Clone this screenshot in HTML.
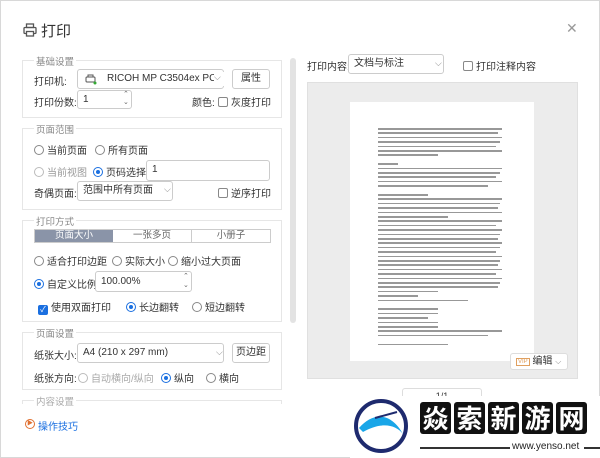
<!DOCTYPE html>
<html><head><meta charset="utf-8"><style>
*{box-sizing:border-box;margin:0;padding:0}
body{width:600px;height:458px;overflow:hidden;background:#fff;font-family:"Liberation Sans","Noto Sans CJK SC",sans-serif;font-size:10px;color:#333;position:relative}
.a{position:absolute;white-space:nowrap}
.grp{position:absolute;left:22px;width:260px;border:1px solid #e6e6e6}
.lg{position:absolute;top:-7px;left:11px;background:#fff;color:#888;font-size:9.5px;padding:0 2px}
.rad{display:inline-block;width:10px;height:10px;border:1px solid #888;border-radius:50%;vertical-align:-1px;margin-right:3px;position:relative}
.rad.on{border-color:#1a6fe0}
.rad.on:after{content:"";position:absolute;left:2px;top:2px;width:4px;height:4px;border-radius:50%;background:#1a6fe0}
.chk{display:inline-block;width:10px;height:10px;border:1px solid #888;border-radius:2px;vertical-align:-1px;margin-right:3px}
.inp{position:absolute;border:1px solid #ccc;border-radius:3px;background:#fff;padding-left:5px;line-height:18px;white-space:nowrap;overflow:hidden}
.btn{position:absolute;border:1px solid #ccc;border-radius:3px;text-align:center;line-height:18px;background:#fff}
.ln{position:absolute;left:378px;height:1.5px;background:#444;opacity:.55}
.lc{display:inline-block;width:31px;height:32px;background:#111;color:#fff;font-size:26px;line-height:32px;text-align:center;margin-right:3px;border-radius:3px;font-weight:bold}
</style></head><body>
<div class="a" style="left:0;top:0;width:600px;height:458px;border:1px solid #d8d8d8"></div>
<svg class="a" style="left:23px;top:23px" width="14" height="14" viewBox="0 0 14 14" fill="none" stroke="#555" stroke-width="1.3"><rect x="3.5" y="1" width="7" height="3.5"/><rect x="1" y="4.5" width="12" height="6" rx="1"/><rect x="3.5" y="8.5" width="7" height="4.5" fill="#fff"/></svg>
<div class="a" style="left:41px;top:20px;font-size:15px;color:#333">打印</div>
<div class="a" style="left:566px;top:20px;font-size:14px;color:#999">✕</div>

<div class="grp" style="top:60px;height:58px"><div class="lg">基础设置</div></div>
<div class="a" style="left:34px;top:73px">打印机:</div>
<div class="inp" style="left:77px;top:69px;width:147px;height:20px;padding-left:29px">RICOH MP C3504ex PCL 6</div>
<svg class="a" style="left:85px;top:74px" width="12" height="11" viewBox="0 0 12 11" fill="none" stroke="#555"><rect x="1" y="3" width="9" height="5" rx="1"/><rect x="3" y="1" width="5" height="2"/><circle cx="10" cy="9" r="1.5" fill="#3a3" stroke="none"/></svg>
<div class="a" style="left:214px;top:72px;width:10px;height:14px;background:#fff;color:#888;font-size:9px">⌵</div>
<div class="btn" style="left:232px;top:69px;width:38px;height:20px">属性</div>
<div class="a" style="left:34px;top:94px">打印份数:</div>
<div class="inp" style="left:77px;top:90px;width:55px;height:19px">1</div>
<div class="a" style="left:123px;top:91px;font-size:7px;color:#666;line-height:8px">⌃<br>⌄</div>
<div class="a" style="left:192px;top:94px">颜色:</div>
<div class="a" style="left:218px;top:94px"><span class="chk"></span>灰度打印</div>

<div class="grp" style="top:128px;height:82px"><div class="lg">页面范围</div></div>
<div class="a" style="left:34px;top:142px"><span class="rad"></span>当前页面</div>
<div class="a" style="left:95px;top:142px"><span class="rad"></span>所有页面</div>
<div class="a" style="left:34px;top:164px;color:#999"><span class="rad" style="border-color:#bbb"></span>当前视图</div>
<div class="a" style="left:93px;top:164px"><span class="rad on"></span>页码选择:</div>
<div class="inp" style="left:146px;top:160px;width:124px;height:21px">1</div>
<div class="a" style="left:34px;top:185px">奇偶页面:</div>
<div class="inp" style="left:77px;top:181px;width:96px;height:20px">范围中所有页面</div>
<div class="a" style="left:164px;top:184px;color:#888;font-size:9px">⌵</div>
<div class="a" style="left:218px;top:185px"><span class="chk"></span>逆序打印</div>

<div class="grp" style="top:220px;height:102px"><div class="lg">打印方式</div></div>
<div class="a" style="left:34px;top:229px;width:237px;height:14px;border:1px solid #ccc;display:flex;text-align:center;line-height:12px;font-size:9.5px;color:#666">
<div style="flex:1;background:#8a94a8;color:#fff">页面大小</div><div style="flex:1;border-right:1px solid #ccc">一张多页</div><div style="flex:1">小册子</div></div>
<div class="a" style="left:34px;top:253px"><span class="rad"></span>适合打印边距</div>
<div class="a" style="left:112px;top:253px"><span class="rad"></span>实际大小</div>
<div class="a" style="left:168px;top:253px"><span class="rad"></span>缩小过大页面</div>
<div class="a" style="left:34px;top:276px"><span class="rad on"></span>自定义比例</div>
<div class="inp" style="left:95px;top:271px;width:97px;height:21px;line-height:19px">100.00%</div>
<div class="a" style="left:183px;top:272px;font-size:7px;color:#666;line-height:9px">⌃<br>⌄</div>
<div class="a" style="left:38px;top:299px"><span class="chk" style="background:#1a6fe0;border-color:#1a6fe0;color:#fff;font-size:8px;line-height:8px;text-align:center">✓</span>使用双面打印</div>
<div class="a" style="left:126px;top:299px"><span class="rad on"></span>长边翻转</div>
<div class="a" style="left:192px;top:299px"><span class="rad"></span>短边翻转</div>

<div class="grp" style="top:332px;height:58px"><div class="lg">页面设置</div></div>
<div class="a" style="left:34px;top:347px">纸张大小:</div>
<div class="inp" style="left:77px;top:343px;width:147px;height:20px">A4 (210 x 297 mm)</div>
<div class="a" style="left:216px;top:347px;color:#888;font-size:9px">⌵</div>
<div class="btn" style="left:232px;top:343px;width:38px;height:20px">页边距</div>
<div class="a" style="left:34px;top:370px">纸张方向:</div>
<div class="a" style="left:78px;top:370px;color:#aaa"><span class="rad" style="border-color:#bbb"></span>自动横向/纵向</div>
<div class="a" style="left:161px;top:370px"><span class="rad on"></span>纵向</div>
<div class="a" style="left:206px;top:370px"><span class="rad"></span>横向</div>
<div class="grp" style="top:400px;height:4px;border-bottom:none"><div class="lg" style="color:#aaa">内容设置</div></div>
<div class="a" style="left:25px;top:419px;width:10px;height:10px;border:1px solid #e07030;border-radius:50%;font-size:6px;color:#e07030;text-align:center;line-height:8px">▶</div>
<div class="a" style="left:38px;top:418px;color:#1a6fe0">操作技巧</div>
<div class="a" style="left:290px;top:58px;width:6px;height:265px;background:#e3e3e3;border-radius:3px"></div>

<div class="a" style="left:307px;top:58px">打印内容:</div>
<div class="inp" style="left:348px;top:54px;width:96px;height:20px">文档与标注</div>
<div class="a" style="left:435px;top:58px;color:#888;font-size:9px">⌵</div>
<div class="a" style="left:463px;top:58px"><span class="chk"></span>打印注释内容</div>
<div class="a" style="left:307px;top:82px;width:271px;height:297px;background:#ececec;border:1px solid #e0e0e0"></div>
<div class="a" style="left:350px;top:102px;width:184px;height:259px;background:#fff"></div>
<div id="doc"></div>
<div class="a" style="left:510px;top:353px;width:58px;height:17px;background:#fff;border:1px solid #ddd;border-radius:3px;font-size:10px;line-height:15px;padding-left:5px"><span style="color:#e0a060;border:1px solid #e0a060;font-size:6px;padding:0 1px;vertical-align:1px">VIP</span> 编辑 <span style="color:#888;font-size:8px">⌵</span></div>
<div class="a" style="left:402px;top:388px;width:80px;height:16px;border:1px solid #ddd;border-radius:3px;text-align:center;font-size:9px;line-height:14px">1/1</div>

<div class="a" style="left:350px;top:396px;width:250px;height:62px;background:#fff"></div>
<svg class="a" style="left:353px;top:398px" width="60" height="56" viewBox="0 0 60 56"><circle cx="28" cy="28" r="25" fill="none" stroke="#1e2a6e" stroke-width="4"/><path d="M6 30 C20 14 38 14 50 36 C42 26 28 24 10 34Z" fill="#19a6e8"/><path d="M22 20 L44 14" stroke="#1e2a6e" stroke-width="2"/></svg>
<div class="a" style="left:420px;top:402px;font-family:'Noto Sans CJK SC',sans-serif"><span class="lc">焱</span><span class="lc">索</span><span class="lc">新</span><span class="lc">游</span><span class="lc">网</span></div>
<div class="a" style="left:420px;top:447px;width:90px;height:2px;background:#333"></div>
<div class="a" style="left:512px;top:441px;font-size:10px;color:#222">www.yenso.net</div>
<div class="a" style="left:584px;top:447px;width:16px;height:2px;background:#333"></div>
<script>
var d=document.getElementById('doc'),h='',y=128;
var ws=[124,120,124,122,118,124,60,0,20,124,122,118,124,110,0,50,124,122,120,124,70,124,118,124,122,120,124,122,118,124,122,120,124,118,124,122,120,60,40,90,0,60,60,50,60,60,124,110,0,70];
for(var i=0;i<ws.length;i++){if(ws[i])h+='<div class="ln" style="top:'+y+'px;width:'+ws[i]+'px"></div>';y+=4.4;}
d.innerHTML=h;
</script>
</body></html>
